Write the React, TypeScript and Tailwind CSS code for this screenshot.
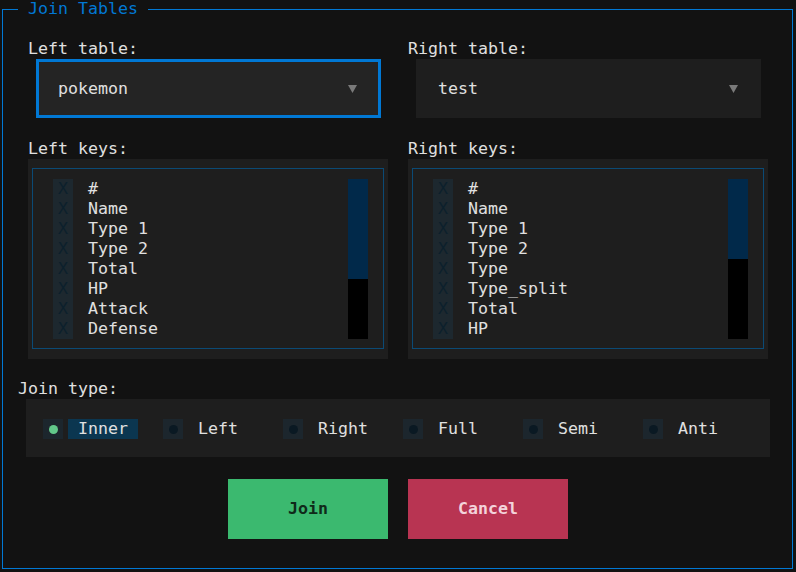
import React from "react";

const leftKeys = ["#", "Name", "Type 1", "Type 2", "Total", "HP", "Attack", "Defense"];
const rightKeys = ["#", "Name", "Type 1", "Type 2", "Type", "Type_split", "Total", "HP"];
const joinTypes = ["Inner", "Left", "Right", "Full", "Semi", "Anti"];

function Arrow() {
  return (
    <svg width="9" height="8" viewBox="0 0 9 8" className="block">
      <polygon points="0,0 9,0 4.5,8" fill="#7a7a7a" />
    </svg>
  );
}

function SelectBox({ value, focused }: { value: string; focused: boolean }) {
  return (
    <div
      className={
        focused
          ? "ml-[8px] w-[345px] h-[59px] border-[3px] border-[#0178D4] bg-[#242424] flex items-center pl-[19px] pr-[21px]"
          : "ml-[8px] w-[345px] h-[59px] border-[3px] border-[#1e1e1e] bg-[#1e1e1e] flex items-center pl-[19px] pr-[20px]"
      }
    >
      <span className="flex-1 leading-[20px]">{value}</span>
      <Arrow />
    </div>
  );
}

function KeyList({ items, thumb }: { items: string[]; thumb: number }) {
  return (
    <div className="w-[360px] h-[200px] bg-[#1e1e1e] pt-[9px] pl-[4px]">
      <div className="w-[352px] h-[181px] border border-[#0b4a75] flex pt-[10px] pl-[20px] pr-[15px]">
        <div className="flex-1 flex flex-col">
          {items.map((k) => (
            <div key={k} className="flex h-[20px] items-center">
              <div className="w-[20px] h-[20px] bg-[#1d282f] text-[#0c202c] flex items-center justify-center leading-[20px]">
                X
              </div>
              <div className="ml-[15px] leading-[20px]">{k}</div>
            </div>
          ))}
        </div>
        <div className="w-[20px] h-[160px] bg-black flex flex-col">
          <div className="w-[20px] bg-[#01294a]" style={{ height: thumb }} />
        </div>
      </div>
    </div>
  );
}

export default function App() {
  return (
    <div className="w-[796px] h-[572px] bg-[#121212] pt-[9px] pl-[2px] font-['DejaVu_Sans_Mono',monospace] text-[16.6px] leading-[20px] text-[#e0e0e0] overflow-hidden">
      <div className="relative w-[791px] h-[560px] border border-[#0178D4] pl-[25px] pt-[29px]">
        <div className="absolute top-[-11px] left-[15px] px-[10px] bg-[#121212] text-[#0178D4] leading-[20px]">
          Join Tables
        </div>
        <div className="flex">
          <div className="w-[380px] flex flex-col">
            <div className="h-[20px]">Left table:</div>
            <SelectBox value="pokemon" focused={true} />
            <div className="h-[20px] mt-[21px]">Left keys:</div>
            <KeyList items={leftKeys} thumb={100} />
          </div>
          <div className="w-[380px] flex flex-col">
            <div className="h-[20px]">Right table:</div>
            <SelectBox value="test" focused={false} />
            <div className="h-[20px] mt-[21px]">Right keys:</div>
            <KeyList items={rightKeys} thumb={80} />
          </div>
        </div>
        <div className="h-[20px] mt-[20px] ml-[-10px]">Join type:</div>
        <div className="ml-[-2px] w-[744px] h-[58px] bg-[#1e1e1e] flex items-start pt-[20px] pl-[17px]">
          {joinTypes.map((t, i) => (
            <div key={t} className="w-[120px] h-[20px] flex">
              <div className="w-[20px] h-[20px] bg-[#1c262d] flex items-center justify-center">
                <div
                  className={
                    i === 0
                      ? "w-[9px] h-[9px] rounded-full bg-[#62c88a]"
                      : "w-[9px] h-[9px] rounded-full bg-[#0a1923]"
                  }
                />
              </div>
              <div
                className={
                  i === 0
                    ? "ml-[5px] px-[10px] h-[20px] leading-[20px] bg-[#0b3650]"
                    : "ml-[5px] px-[10px] h-[20px] leading-[20px]"
                }
              >
                {t}
              </div>
            </div>
          ))}
        </div>
        <div className="mt-[22px] ml-[200px] flex gap-[20px]">
          <div className="w-[160px] h-[60px] bg-[#3bb96f] text-[#0f2a19] font-bold flex items-center justify-center">
            Join
          </div>
          <div className="w-[160px] h-[60px] bg-[#b83452] text-[#f3d3db] font-bold flex items-center justify-center">
            Cancel
          </div>
        </div>
      </div>
    </div>
  );
}
